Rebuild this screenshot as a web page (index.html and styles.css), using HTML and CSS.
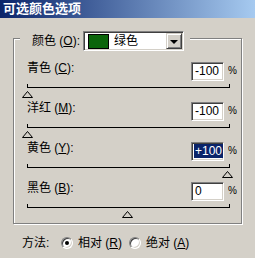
FILE: index.html
```html
<!DOCTYPE html>
<html lang="zh-CN">
<head>
  <meta charset="UTF-8">
  <title>可选颜色选项</title>
  <link rel="stylesheet" href="styles.css">
</head>
<body>
  <div class="titlebar">可选颜色选项</div>

  <div class="group">
    <div class="group-head">
      <span class="head-label">颜色 (<u>O</u>):</span>
      <div class="combo">
        <span class="swatch"></span>
        <span class="combo-text">绿色</span>
        <span class="combo-btn"><span class="arrow"></span></span>
      </div>
    </div>

    <div class="rows">
      <div class="row">
        <span class="row-label">青色 (<u>C</u>):</span>
        <div class="field">-100</div>
        <span class="pct">%</span>
        <div class="track"></div>
        <svg class="thumb" style="margin-left:-5px" width="11" height="7" viewBox="0 0 11 7"><polygon points="5.5,0.5 10.5,6.5 0.5,6.5"/></svg>
      </div>
      <div class="row">
        <span class="row-label">洋红 (<u>M</u>):</span>
        <div class="field">-100</div>
        <span class="pct">%</span>
        <div class="track"></div>
        <svg class="thumb" style="margin-left:-5px" width="11" height="7" viewBox="0 0 11 7"><polygon points="5.5,0.5 10.5,6.5 0.5,6.5"/></svg>
      </div>
      <div class="row">
        <span class="row-label">黄色 (<u>Y</u>):</span>
        <div class="field"><span class="sel">+100</span></div>
        <span class="pct">%</span>
        <div class="track"></div>
        <svg class="thumb" style="margin-left:195px" width="11" height="7" viewBox="0 0 11 7"><polygon points="5.5,0.5 10.5,6.5 0.5,6.5"/></svg>
      </div>
      <div class="row">
        <span class="row-label">黑色 (<u>B</u>):</span>
        <div class="field">0</div>
        <span class="pct">%</span>
        <div class="track"></div>
        <svg class="thumb" style="margin-left:95px" width="11" height="7" viewBox="0 0 11 7"><polygon points="5.5,0.5 10.5,6.5 0.5,6.5"/></svg>
      </div>
    </div>
  </div>

  <div class="method">
    <span class="method-label">方法:</span>
    <span class="option"><span class="radio checked"></span>相对 (<u>R</u>)</span>
    <span class="option"><span class="radio"></span>绝对 (<u>A</u>)</span>
  </div>
</body>
</html>
```

FILE: styles.css
```css
body { margin: 0; background: #d4d0c8; font: 12px/14px "Liberation Sans", "Noto Sans CJK SC", sans-serif; color: #000; }

.titlebar { height: 18px; line-height: 18px; padding-left: 3px; color: #fff; font-weight: bold; font-size: 13px; background: linear-gradient(to right, #0a246a, #a6caf0); }

.group { margin: 20px 0 0 13px; width: 229px; height: 186px; box-sizing: border-box; border: 1px solid #808080; box-shadow: inset 1px 1px #fff, 1px 1px #fff; }
.group-head { display: flex; align-items: center; width: max-content; height: 20px; margin: -8px 0 0 6px; padding: 0 6px 0 12px; background: #d4d0c8; }
.head-label { width: 51px; }

.combo { display: flex; align-items: center; width: 101px; height: 20px; box-sizing: border-box; background: #fff; border: 1px solid; border-color: #808080 #fff #fff #808080; box-shadow: inset 1px 1px #404040, inset -1px -1px #d4d0c8; padding: 1px; }
.swatch { width: 21px; height: 15px; box-sizing: border-box; margin-left: 3px; border: 1px solid #000; background: #0b650b; }
.combo-text { margin-left: 5px; flex: 1; }
.combo-btn { display: flex; align-items: center; justify-content: center; width: 16px; height: 16px; box-sizing: border-box; background: #d4d0c8; border: 1px solid; border-color: #d4d0c8 #404040 #404040 #d4d0c8; box-shadow: inset 1px 1px #fff, inset -1px -1px #808080; }
.arrow { width: 0; height: 0; border-left: 4px solid transparent; border-right: 4px solid transparent; border-top: 4px solid #000; margin-top: 1px; }

.rows { margin-top: 11px; padding-left: 13px; }
.row { display: grid; grid-template-columns: 164px 33px auto; grid-template-rows: 19px auto auto; height: 40px; }
.row-label { margin-top: -1px; }
.field { height: 19px; box-sizing: border-box; padding: 1px 0 0 3px; line-height: 14px; background: #fff; border: 1px solid; border-color: #808080 #fff #fff #808080; box-shadow: inset 1px 1px #404040, inset -1px -1px #d4d0c8; }
.sel { background: #0a246a; color: #fff; padding: 0 1px; margin-left: -1px; }
.pct { padding-left: 4px; font-size: 10px; line-height: 18px; }
.track { grid-column: 1 / -1; width: 201px; height: 3px; margin-top: 3px; box-sizing: content-box; border: 1px solid #000; border-top: none; }
.thumb { grid-column: 1 / -1; display: block; margin-top: -1px; }
.thumb polygon { fill: #d4d0c8; stroke: #000; stroke-width: 1; }

.method { display: flex; align-items: center; height: 16px; margin-top: 11px; padding-left: 22px; }
.method-label { width: 39px; }
.option { display: flex; align-items: center; width: 68px; }
.radio { position: relative; width: 12px; height: 12px; box-sizing: border-box; margin-right: 5px; border-radius: 50%; background: #fff; border: 1px solid; border-color: #808080 #fff #fff #808080; box-shadow: inset 1px 1px #404040, inset -1px -1px #d4d0c8; }
.radio.checked::after { content: ""; position: absolute; left: 3px; top: 3px; width: 4px; height: 4px; border-radius: 50%; background: #000; }
```
